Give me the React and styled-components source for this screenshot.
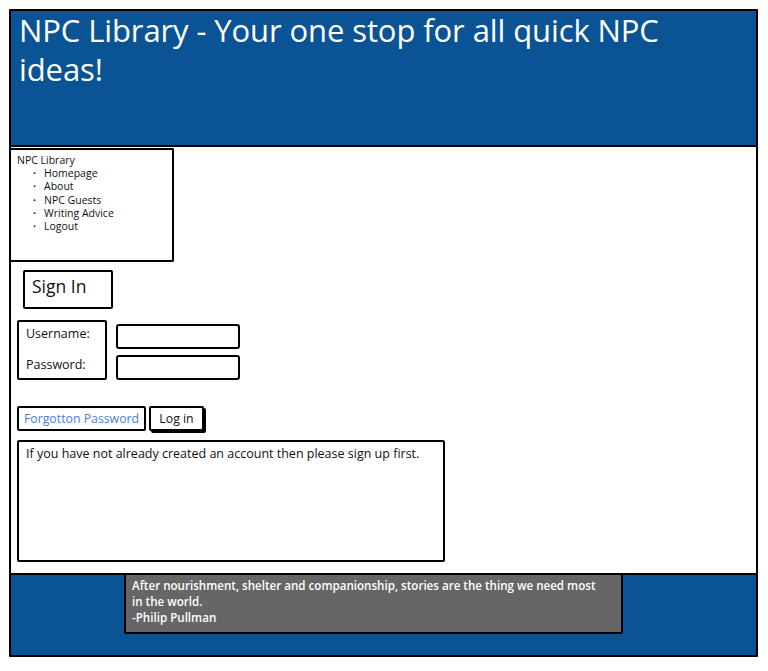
import { createGlobalStyle } from "styled-components";
import styled from "styled-components";

const GlobalStyle = createGlobalStyle`
  html, body {
    margin: 0;
    padding: 0;
    background: #fff;
  }
  body {
    font-family: "Open Sans", "Liberation Sans", Arial, sans-serif;
    color: #111;
  }
`;

const navLinks = ["Homepage", "About", "NPC Guests", "Writing Advice", "Logout"];

function App() {
  return (
    <>
      <GlobalStyle />
      <Page>
        <Header>
          <Title>NPC Library - Your one stop for all quick NPC ideas!</Title>
        </Header>

        <Main>
          <NavBox>
            <NavTitle>NPC Library</NavTitle>
            <NavList>
              {navLinks.map((l) => (
                <NavItem key={l}>{l}</NavItem>
              ))}
            </NavList>
          </NavBox>

          <Content>
            <SignInBox>Sign In</SignInBox>

            <FormRow>
              <LabelBox>
                <Label>Username:</Label>
                <Label>Password:</Label>
              </LabelBox>
              <Inputs>
                <Input type="text" />
                <Input type="password" />
              </Inputs>
            </FormRow>

            <ButtonRow>
              <Button link width="129px">Forgotton Password</Button>
              <Button primary width="55px">Log in</Button>
            </ButtonRow>

            <InfoBox>If you have not already created an account then please sign up first.</InfoBox>
          </Content>
        </Main>

        <Footer>
          <Quote>
            After nourishment, shelter and companionship, stories are the thing we need most in the world.
            <br />
            -Philip Pullman
          </Quote>
        </Footer>
      </Page>
    </>
  );
}

export default App;

/* --- styled-components --- */

const Page = styled.div`
  width: 749px;
  margin: 9px 0 0 9px;
  display: flex;
  flex-direction: column;
`;

const Header = styled.header`
  height: 134px;
  background: #0a5394;
  border: 2px solid #000;
  border-radius: 1px;
  padding: 0 8px;
`;

const Title = styled.h1`
  margin: 0;
  max-width: 700px;
  color: #fff;
  font-size: 31px;
  font-weight: 500;
  line-height: 39px;
  letter-spacing: -0.1px;
`;

const Main = styled.div`
  height: 426px;
  background: #fff;
  border-left: 2px solid #000;
  border-right: 2px solid #000;
  display: flex;
  flex-direction: column;
  align-items: flex-start;
`;

const NavBox = styled.nav`
  width: 163px;
  height: 114px;
  margin-top: 1px;
  border: 2px solid #000;
  border-left: none;
  border-radius: 0 2px 2px 0;
  padding: 4px 0 0 6px;
  box-sizing: border-box;
  font-size: 10.5px;
`;

const NavTitle = styled.div`
  line-height: 13px;
`;

const NavList = styled.ul`
  margin: 0;
  padding: 0 0 0 27px;
  list-style: none;
`;

const NavItem = styled.li`
  position: relative;
  line-height: 13.3px;
  &::before {
    content: "·";
    position: absolute;
    left: -11px;
    font-weight: bold;
  }
`;

const Content = styled.div`
  padding: 8px 0 0 6px;
  display: flex;
  flex-direction: column;
  align-items: flex-start;
`;

const SignInBox = styled.div`
  margin-left: 6px;
  width: 90px;
  height: 39px;
  box-sizing: border-box;
  border: 2px solid #000;
  border-radius: 2px;
  padding: 2px 0 0 7px;
  font-size: 17.5px;
  line-height: 24px;
`;

const FormRow = styled.div`
  margin-top: 11px;
  display: flex;
  gap: 9px;
`;

const LabelBox = styled.div`
  width: 90px;
  height: 60px;
  box-sizing: border-box;
  border: 2px solid #000;
  border-radius: 2px;
  padding: 3px 0 0 7px;
  display: flex;
  flex-direction: column;
  gap: 14px;
`;

const Label = styled.span`
  font-size: 12.5px;
  line-height: 17px;
`;

const Inputs = styled.div`
  margin-top: 4px;
  display: flex;
  flex-direction: column;
  gap: 6px;
`;

const Input = styled.input`
  width: 124px;
  height: 25px;
  box-sizing: border-box;
  border: 2px solid #000;
  border-radius: 3px;
  background: #fff;
  outline: none;
`;

const ButtonRow = styled.div`
  margin-top: 26px;
  display: flex;
  gap: 3px;
`;

const Button = styled.button`
  width: ${(p) => p.width};
  height: 25px;
  box-sizing: border-box;
  border: 2px solid #000;
  border-radius: 2px;
  background: #fff;
  font-family: inherit;
  font-size: 12.3px;
  padding: 0;
  color: ${(p) => (p.link ? "#4a7fe0" : "#111")};
  box-shadow: ${(p) => (p.primary ? "2px 2px 0 #000" : "none")};
  cursor: pointer;
`;

const InfoBox = styled.div`
  margin-top: 9px;
  width: 428px;
  height: 122px;
  box-sizing: border-box;
  border: 2px solid #000;
  border-radius: 2px;
  padding: 3px 7px;
  font-size: 12.5px;
  line-height: 17px;
`;

const Footer = styled.footer`
  height: 80px;
  background: #0a5394;
  border: 2px solid #000;
  border-radius: 1px;
  padding: 0 0 0 113px;
`;

const Quote = styled.div`
  width: 499px;
  height: 61px;
  margin-top: -2px;
  box-sizing: border-box;
  background: #666;
  border: 2px solid #000;
  border-radius: 2px;
  padding: 3px 22px 3px 6px;
  color: #fff;
  font-size: 11.6px;
  font-weight: 600;
  line-height: 16px;
`;
